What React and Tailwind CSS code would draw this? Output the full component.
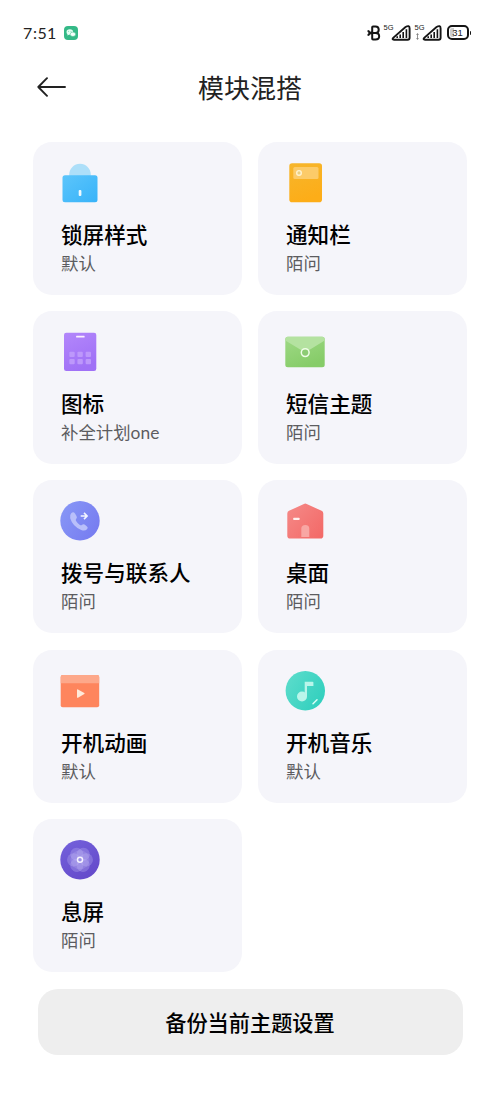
import React from "react";

function LockIcon() {
  return (
    <>
      <defs>
        <linearGradient id="lock" x1="0" y1="0" x2="1" y2="1">
          <stop offset="0" stopColor="#5cc5fb" />
          <stop offset="1" stopColor="#38b3f9" />
        </linearGradient>
      </defs>
      <circle cx="21" cy="12.6" r="10.8" fill="#addff9" />
      <rect x="3.5" y="13.2" width="35" height="27" rx="2.5" fill="url(#lock)" />
      <rect x="19.7" y="28" width="2.7" height="6" rx="1" fill="#effaff" />
    </>
  );
}

function PanelIcon() {
  return (
    <>
      <defs>
        <linearGradient id="panel" x1="0" y1="0" x2="0.3" y2="1">
          <stop offset="0" stopColor="#f6b62c" />
          <stop offset="1" stopColor="#fdad18" />
        </linearGradient>
      </defs>
      <rect x="5.3" y="1.3" width="32.7" height="38.9" rx="2.8" fill="url(#panel)" />
      <rect x="9.3" y="4.9" width="25.2" height="12" rx="1.5" fill="#fccb69" />
      <circle cx="15" cy="10.9" r="2.3" fill="#e9cf83" stroke="#fff3cf" strokeWidth="1.4" />
    </>
  );
}

const dots = [
  [10.3, 20.7], [18.4, 20.7], [26.6, 20.7],
  [10.3, 28.1], [18.4, 28.1], [26.6, 28.1],
];

function GridIcon() {
  return (
    <>
      <defs>
        <linearGradient id="grid" x1="0" y1="0" x2="0.4" y2="1">
          <stop offset="0" stopColor="#b387fb" />
          <stop offset="1" stopColor="#a071f6" />
        </linearGradient>
      </defs>
      <rect x="5" y="1.7" width="32.3" height="38.3" rx="2.3" fill="url(#grid)" />
      <rect x="17.1" y="4.8" width="8.5" height="1.8" rx="0.5" fill="#fbefff" />
      {dots.map(([x, y]) => (
        <rect key={`${x}-${y}`} x={x} y={y} width="5.4" height="5.2" rx="1" fill="#bd98fb" />
      ))}
    </>
  );
}

function MailIcon() {
  return (
    <>
      <defs>
        <linearGradient id="mail" x1="0" y1="0" x2="0.5" y2="1">
          <stop offset="0" stopColor="#9fd986" />
          <stop offset="1" stopColor="#86cc68" />
        </linearGradient>
      </defs>
      <rect x="1.3" y="5.7" width="39.4" height="30.6" rx="2.5" fill="url(#mail)" />
      <path d="M3.5 5.7H38.5Q40.7 5.7 40.7 8.2V9.5L21.2 21.5L1.3 9.5V8.2Q1.3 5.7 3.5 5.7Z" fill="#b4e2a0" />
      <circle cx="21.2" cy="21.6" r="3.9" fill="#8dcc74" stroke="#f0fde8" strokeWidth="1.5" />
    </>
  );
}

function PhoneIcon() {
  return (
    <>
      <defs>
        <linearGradient id="phone" x1="0" y1="0.2" x2="1" y2="0.8">
          <stop offset="0" stopColor="#8796f6" />
          <stop offset="1" stopColor="#767bf0" />
        </linearGradient>
      </defs>
      <circle cx="21" cy="20.8" r="19.7" fill="url(#phone)" />
      <path
        d="M12.2 13.2Q14.3 11.2 16 13.5L17.6 16.2Q18.4 17.8 17.1 18.9Q16.2 19.7 17.1 21.1Q18.500 23.600 20.900 25Q22.200 25.700 23.100 24.800Q24.200 23.800 25.600 24.600L28 26.500Q29.500 27.800 28 29.300Q25.900 31.400 22.200 30Q13.800 26.700 11.200 18.300Q10.400 15 12.200 13.200Z"
        fill="#b9bffa"
      />
      <path d="M21.700 16H28M25 12.900L28.100 16L25 19.100" fill="none" stroke="#f3f5ff" strokeWidth="1.6" />
    </>
  );
}

function HomeIcon() {
  return (
    <>
      <defs>
        <linearGradient id="home" x1="0" y1="0" x2="1" y2="0.8">
          <stop offset="0" stopColor="#f58a88" />
          <stop offset="1" stopColor="#f36b69" />
        </linearGradient>
      </defs>
      <path
        d="M19.9 4Q21.3 3.2 22.7 4L37.6 10.8Q39.3 11.7 39.3 13.400V35.800Q39.300 38.600 36.500 38.600H6.100Q3.300 38.600 3.300 35.800V13.400Q3.300 11.700 5 10.800Z"
        fill="url(#home)"
      />
      <rect x="9.3" y="17.7" width="6.2" height="2.2" rx="0.5" fill="#fff0ee" />
      <path d="M17.3 37V28.7A4 3.6 0 0 1 25.300 28.700V37Z" fill="#f8a6a3" />
    </>
  );
}

function FilmIcon() {
  return (
    <>
      <rect x="1.7" y="5" width="38.5" height="32.3" rx="2" fill="#fe855d" />
      <path d="M3.7 5H38.2Q40.2 5 40.2 7V13.3H1.7V7Q1.7 5 3.7 5Z" fill="#fda88a" />
      <path d="M18 20Q18 19 19 19.5L25.3 23Q26 23.6 25.3 24.1L19 27.7Q18 28.2 18 27.2Z" fill="#ffeada" />
    </>
  );
}

function MusicIcon() {
  return (
    <>
      <defs>
        <linearGradient id="music" x1="0" y1="0.2" x2="1" y2="0.8">
          <stop offset="0" stopColor="#5bdccb" />
          <stop offset="1" stopColor="#2fcfbd" />
        </linearGradient>
      </defs>
      <circle cx="21.3" cy="20.8" r="19.7" fill="url(#music)" />
      <circle cx="18" cy="26.5" r="5" fill="#b9f5ea" />
      <path d="M20.7 11.7H28.5Q29.4 11.7 29.4 12.6V16H23V26.5H20.7Z" fill="#b9f5ea" />
      <path d="M29 33.7L33 29.7" stroke="#d9fff6" strokeWidth="1.5" strokeLinecap="round" />
    </>
  );
}

const petals = [0, 60, 120, 180, 240, 300];

function FlowerIcon() {
  return (
    <>
      <defs>
        <linearGradient id="flower" x1="0" y1="0" x2="0.6" y2="1">
          <stop offset="0" stopColor="#7462dc" />
          <stop offset="1" stopColor="#654bcb" />
        </linearGradient>
      </defs>
      <circle cx="21" cy="20.8" r="19.7" fill="url(#flower)" />
      {petals.map((a) => (
        <circle key={a} cx="27.4" cy="20.8" r="6.6" fill="#c8c2f8" fillOpacity="0.28" transform={`rotate(${a} 21 20.8)`} />
      ))}
      <circle cx="21" cy="20.8" r="9.5" fill="#c3bcf5" fillOpacity="0.22" />
      <circle cx="21" cy="20.8" r="2.5" fill="#9b91e3" stroke="#f4f1ff" strokeWidth="1.5" />
    </>
  );
}

const modules = [
  { title: "锁屏样式", value: "默认", Icon: LockIcon },
  { title: "通知栏", value: "陌问", Icon: PanelIcon },
  { title: "图标", value: "补全计划one", Icon: GridIcon },
  { title: "短信主题", value: "陌问", Icon: MailIcon },
  { title: "拨号与联系人", value: "陌问", Icon: PhoneIcon },
  { title: "桌面", value: "陌问", Icon: HomeIcon },
  { title: "开机动画", value: "默认", Icon: FilmIcon },
  { title: "开机音乐", value: "默认", Icon: MusicIcon },
  { title: "息屏", value: "陌问", Icon: FlowerIcon },
];

function ModuleCard({ title, value, Icon }) {
  return (
    <div className="flex h-[153px] flex-col items-start rounded-[19px] bg-[#f5f5fa] pt-5 pl-[26px]">
      <svg className="size-[42px] shrink-0" viewBox="0 0 42 42" aria-hidden="true">
        <Icon />
      </svg>
      <h2 className="mt-[16px] ml-[2px] text-[21.6px] leading-[28px] font-medium whitespace-nowrap text-black">{title}</h2>
      <p className="mt-[4px] ml-[2px] font-['Lato','Noto_Sans_CJK_SC',sans-serif] text-[17.4px] leading-[24px] whitespace-nowrap text-[#5c5c60]">{value}</p>
    </div>
  );
}

function Signal() {
  return (
    <svg className="h-[18px] w-5" viewBox="0 0 20 18" aria-hidden="true">
      <path d="M3 15.7Q0.6 15.7 2.2 13.8L14.500 3Q18.600 0.600 18.600 4.500V13.700Q18.600 15.700 16.600 15.700Z" fill="none" stroke="#151515" strokeWidth="1.9" />
      <path d="M6.200 14V12.300M9.200 14V10.500M12.200 14V8M15.400 14V5.300" stroke="#151515" strokeWidth="1.6" />
    </svg>
  );
}

function StatusBar() {
  return (
    <div className="flex h-[65px] items-center pr-[29px] pl-[23px] text-[#222]">
      <span className="w-[33px] font-['Lato',sans-serif] text-[16px] leading-5 tracking-[0.1px] whitespace-nowrap">7<span className="px-[0.5px]">:</span>51</span>
      <svg className="ml-[8px] size-[14px]" viewBox="0 0 14 14" aria-hidden="true">
        <rect width="14" height="14" rx="4" fill="#34b987" />
        <ellipse cx="5.8" cy="6" rx="3.3" ry="2.7" fill="#e4fff3" />
        <path d="M3.7 7.5L3.3 9.5L5.5 8.4Z" fill="#e4fff3" />
        <ellipse cx="8.9" cy="8.3" rx="2.7" ry="2.2" fill="#f5fffa" stroke="#34b987" strokeWidth="0.5" />
        <circle cx="4.7" cy="5.3" r="0.45" fill="#34b987" />
        <circle cx="7" cy="5.3" r="0.45" fill="#34b987" />
      </svg>
      <div className="ml-auto flex items-center">
        <svg className="h-[18px] w-[14px]" viewBox="0 0 14 18" aria-hidden="true">
          <path d="M1 6.300Q2.200 9 5 9Q2.200 9 1 11.700M5 9H9M5.200 14.800V3.200Q5.200 2.500 6 2.500H8.500C12.800 2.500 12.800 9 8.500 9C13.400 9 13.400 15.500 8.500 15.500H6Q5.200 15.500 5.200 14.800Z" fill="none" stroke="#151515" strokeWidth="2" strokeLinejoin="round" />
        </svg>
        <span className="mb-[10px] ml-[3px] w-[11px] font-['Liberation_Sans',sans-serif] text-[7.5px] leading-[9px]">5G</span>
        <div className="-ml-[4px] flex"><Signal /></div>
        <div className="ml-[4px] mb-[3px] flex w-[11px] flex-col items-start">
          <span className="font-['Liberation_Sans',sans-serif] text-[7.5px] leading-[9px]">5G</span>
          <svg className="mt-px ml-[1px] h-[7px] w-[3px]" viewBox="0 0 3 7" aria-hidden="true">
            <path d="M1.5 0.5V6.5M0.5 2L1.5 0.7L2.500 2M0.500 5L1.500 6.300L2.500 5" fill="none" stroke="#777" strokeWidth="0.8" />
          </svg>
        </div>
        <div className="-ml-[4px] flex"><Signal /></div>
        <div className="ml-[5px] flex h-[15px] w-[22px] items-center justify-center rounded-[5px] border-2 border-[#151515] bg-[linear-gradient(90deg,#ccc_30%,#fff_30%)] bg-clip-content p-px font-['Liberation_Sans',sans-serif] text-[9.5px] leading-none">31</div>
        <div className="ml-px h-1 w-[1.5px] rounded-r-sm bg-[#151515]" />
      </div>
    </div>
  );
}

export default function App() {
  return (
    <main className="h-[1111px] w-[500px] overflow-hidden bg-white font-['Noto_Sans_CJK_SC',sans-serif]">
      <StatusBar />
      <header className="grid h-[44px] grid-cols-[1fr_auto_1fr] items-center px-[37px]">
        <svg className="h-5 w-[29px]" viewBox="0 0 29 20" fill="none" stroke="#222" strokeWidth="1.9" strokeLinecap="round" strokeLinejoin="round" aria-label="返回">
          <path d="M28 10H1.3M10 1.2L1.3 10L10 18.8" />
        </svg>
        <h1 className="-mt-px text-[26px] leading-[40px] font-normal text-[#222]">模块混搭</h1>
      </header>
      <section className="mt-[32.6px] grid grid-cols-[209px_209px] gap-x-4 gap-y-[16.4px] pl-[33px]">
        {modules.map((m) => (
          <ModuleCard key={m.title} {...m} />
        ))}
      </section>
      <button className="mx-auto mt-[17.2px] flex h-[66px] w-[425px] items-center justify-center rounded-[20px] bg-[#eee] text-[21.2px] font-medium text-black">
        备份当前主题设置
      </button>
    </main>
  );
}
